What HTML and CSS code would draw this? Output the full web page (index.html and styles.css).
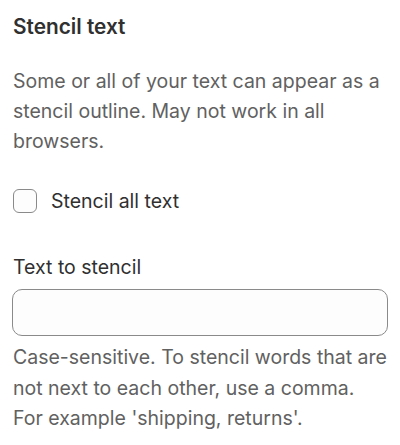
FILE: index.html
```html
<!DOCTYPE html>
<html lang="en">
<head>
  <meta charset="UTF-8" />
  <title>Stencil text</title>
  <link rel="stylesheet" href="styles.css">
</head>
<body>
  <div class="panel">
    <h2>Stencil text</h2>
    <p class="desc">Some or all of your text can appear as a stencil outline. May not work in all browsers.</p>

    <label class="check">
      <input type="checkbox">
      <span>Stencil all text</span>
    </label>

    <div class="field">
      <label for="stencil">Text to stencil</label>
      <input type="text" id="stencil">
      <p class="help">Case-sensitive. To stencil words that are not next to each other, use a comma. For example 'shipping, returns'.</p>
    </div>
  </div>
</body>
</html>
```

FILE: styles.css
```css
body {
  margin: 0;
  background: #ffffff;
  font-family: Inter, 'Noto Sans', sans-serif;
  color: #303030;
}

.panel {
  padding: 14px 12px 0 12px;
}

h2 {
  margin: 0;
  font-size: 20.8px;
  font-weight: 600;
  line-height: 26px;
  padding-left: 1px;
}

.desc {
  margin: 26px 0 0 1px;
  font-size: 19.5px;
  line-height: 30px;
  color: #616161;
}

.check {
  display: flex;
  align-items: center;
  gap: 14px;
  margin-top: 33px;
  height: 24px;
  font-size: 19.5px;
  color: #303030;
}

.check input {
  appearance: none;
  margin: 0 0 0 1px;
  width: 24px;
  height: 24px;
  border: 1px solid #8a8a8a;
  border-radius: 6px;
  background: #fdfdfd;
}

.field {
  margin-top: 42px;
}

.field label {
  display: block;
  font-size: 19.5px;
  line-height: 24px;
  padding-left: 1px;
  color: #303030;
}

.field input {
  display: block;
  box-sizing: border-box;
  width: 100%;
  height: 47px;
  margin-top: 10px;
  border: 1px solid #8a8a8a;
  border-radius: 10px;
  background: #fdfdfd;
  font-size: 19.5px;
}

.help {
  margin: 6px 0 0 1px;
  font-size: 19.5px;
  line-height: 30.5px;
  color: #616161;
}
```
